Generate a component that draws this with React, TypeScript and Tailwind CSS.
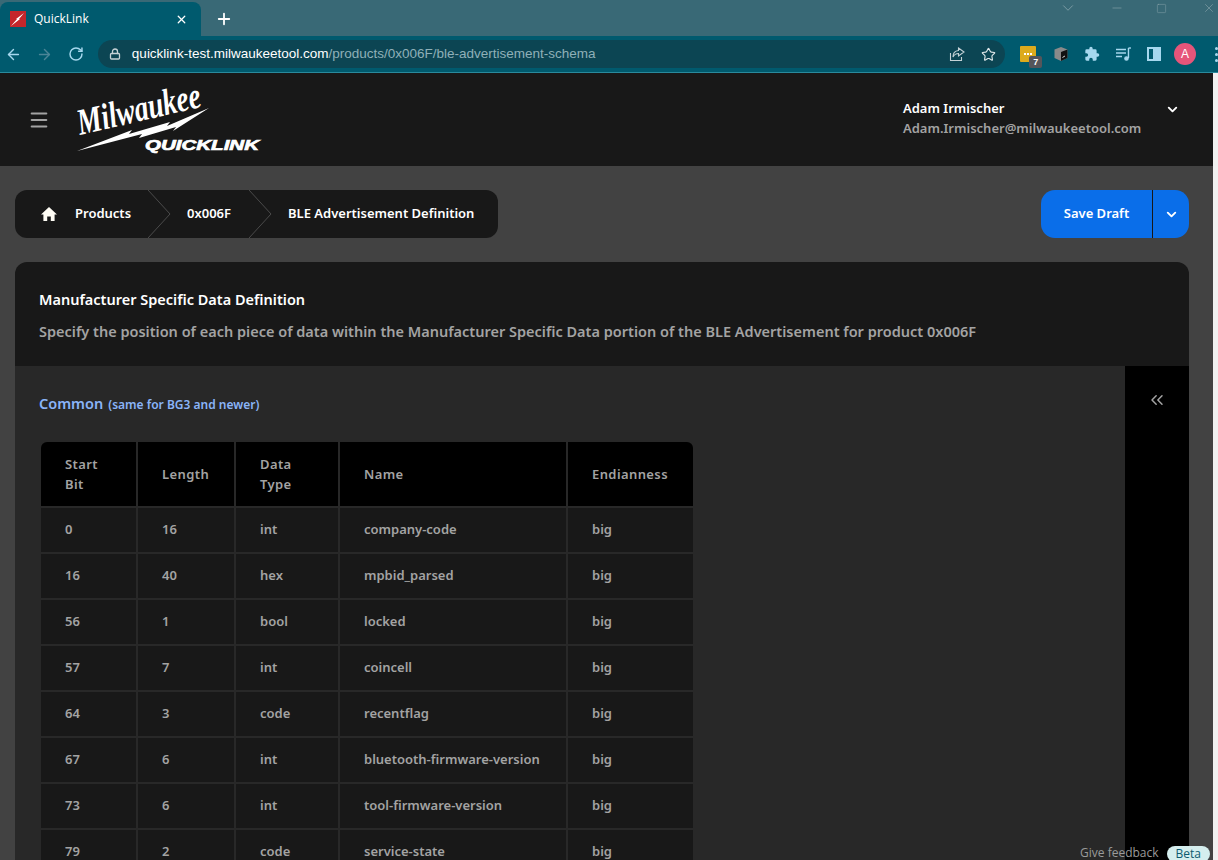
import React from "react";
import { ArrowLeft, ArrowRight, ChevronDown, ChevronsLeft, Lock, Menu, Minus, Plus, RotateCw, Square, Star, X } from "lucide-react";

const columns = [
  { label: ["Start", "Bit"], width: "w-[96px]" },
  { label: ["Length"], width: "w-[98px]" },
  { label: ["Data", "Type"], width: "w-[104px]" },
  { label: ["Name"], width: "w-[228px]" },
  { label: ["Endianness"], width: "w-[126px]" },
];

const rows = [
  ["0", "16", "int", "company-code", "big"],
  ["16", "40", "hex", "mpbid_parsed", "big"],
  ["56", "1", "bool", "locked", "big"],
  ["57", "7", "int", "coincell", "big"],
  ["64", "3", "code", "recentflag", "big"],
  ["67", "6", "int", "bluetooth-firmware-version", "big"],
  ["73", "6", "int", "tool-firmware-version", "big"],
  ["79", "2", "code", "service-state", "big"],
  ["81", "1", "bool", "paired", "big"],
];

const Logo = () => (
  <svg width="190" height="76" viewBox="0 0 190 76" className="shrink-0">
    <text
      x="3"
      y="53"
      transform="rotate(-13 3 53)"
      fill="#fff"
      fontFamily="'Liberation Serif', serif"
      fontStyle="italic"
      fontWeight="700"
      fontSize="37"
      textLength="126"
      lengthAdjust="spacingAndGlyphs"
    >
      Milwaukee
    </text>
    <path d="M0 69 L55 48 L52 52 L93 40 L90 44 L132 26 L96 49 L99 45 L62 56 L65 52 Z" fill="#fff" />
    <text x="68" y="68" fill="#fff" fontFamily="'Liberation Sans', sans-serif" fontStyle="italic" fontWeight="700" fontSize="14.5" textLength="114" lengthAdjust="spacingAndGlyphs" stroke="#fff" strokeWidth="0.7">
      QUICKLINK
    </text>
  </svg>
);

const BrowserChrome = () => (
  <div className="shrink-0">
    <div className="h-[36px] bg-[#396976] flex items-end relative">
      <div className="w-[201px] h-[34px] bg-[#005a6e] rounded-t-lg flex items-center pl-[10px] pr-[13px]">
        <svg width="16" height="16" viewBox="0 0 16 16" className="shrink-0">
          <rect width="16" height="16" fill="#c4262b" />
          <path d="M1 15 L7 8 L6 8 L14 2 L9 8 L10 8 Z" fill="#fff" />
        </svg>
        <span className="ml-[8px] text-[12px] text-white font-['Open_Sans',sans-serif]">QuickLink</span>
        <X size={13} strokeWidth={2.4} className="ml-auto text-white" />
      </div>
      <div className="ml-[14px] mb-[8px] text-white">
        <Plus size={18} strokeWidth={2.4} />
      </div>
      <div className="ml-auto h-[16px] self-start flex items-center text-[#8fa9b0] mt-0">
        <ChevronDown size={18} strokeWidth={1} className="mr-[33px]" />
        <Minus size={14} strokeWidth={1} className="mr-[32px]" />
        <Square size={11} strokeWidth={1} className="mr-[35px]" />
        <X size={14} strokeWidth={1} className="mr-[2px]" />
      </div>
    </div>
    <div className="h-[37px] bg-[#005a6e] border-b border-[#2a8a9c] flex items-center">
      <ArrowLeft size={17} strokeWidth={2} className="ml-[5px] text-[#a6d8ee]" />
      <ArrowRight size={17} strokeWidth={2} className="ml-[14px] text-[#4b8597]" />
      <RotateCw size={16} strokeWidth={2.2} className="ml-[15px] text-[#a6d8ee]" />
      <div className="ml-[14px] w-[910px] h-[28px] rounded-full bg-[#0c4553] flex items-center pl-[11px] pr-[9px]">
        <Lock size={12} strokeWidth={2.6} className="text-[#c5d2d6]" />
        <span className="ml-[11px] text-[13.5px] leading-none text-[#8fb0b8] font-['Liberation_Sans',sans-serif] whitespace-nowrap">
          <span className="text-white">quicklink-test.milwaukeetool.com</span>/products/0x006F/ble-advertisement-schema
        </span>
        <svg width="16" height="16" viewBox="0 0 16 16" className="ml-auto mr-[16px] text-[#c5d2d6]" fill="none" stroke="currentColor" strokeWidth="1.1">
          <path d="M1.5 7 V14.5 H12.5 V11" />
          <path d="M9.5 2 L15 6 L9.5 10 V7.5 C6.5 7.5 5 9 4 11 C4 7.5 6 4.8 9.5 4.5 Z" />
        </svg>
        <Star size={15} strokeWidth={1.8} className="text-[#dfe7e9]" />
      </div>
      <div className="ml-[15px] relative w-[16px] h-[16px] bg-[#dcab1d] rounded-[1px] flex items-center justify-center gap-[1px]">
        <i className="w-[2px] h-[2px] bg-white" />
        <i className="w-[2px] h-[2px] bg-white" />
        <i className="w-[2px] h-[2px] bg-white" />
        <span className="absolute left-[9px] top-[10px] w-[13px] h-[12px] rounded-[2px] bg-[#55555a] text-white text-[9px] font-bold leading-[12px] text-center font-['Liberation_Sans',sans-serif]">7</span>
      </div>
      <svg width="16" height="16" viewBox="0 0 16 16" className="ml-[17px]">
        <path d="M8 1 L14.5 3.5 V12 L8 15 L1.5 12 V3.5 Z" fill="#8a8a8a" />
        <path d="M8 6 L14.5 3.5 V12 L8 15 Z" fill="#111" />
        <path d="M9.5 11.5 L12 10" stroke="#ddd" strokeWidth="1" />
      </svg>
      <svg width="16" height="16" viewBox="0 0 24 24" className="ml-[15px]" fill="#a6d8ee">
        <path d="M20.5 11H19V7a2 2 0 0 0-2-2h-4V3.5a2.5 2.5 0 0 0-5 0V5H4a2 2 0 0 0-2 2v3.8h1.5a2.7 2.7 0 0 1 0 5.4H2V20a2 2 0 0 0 2 2h3.8v-1.5a2.7 2.7 0 0 1 5.4 0V22H17a2 2 0 0 0 2-2v-4h1.5a2.5 2.5 0 0 0 0-5z" />
      </svg>
      <svg width="17" height="16" viewBox="0 0 17 16" className="ml-[15px]" fill="none" stroke="#a6d8ee" strokeWidth="1.4">
        <path d="M1 3.5 H11 M1 7 H11 M1 10.5 H7" />
        <path d="M13.5 2 V12" />
        <path d="M13.5 2 H16" />
        <circle cx="11.5" cy="12.5" r="1.6" fill="#a6d8ee" />
      </svg>
      <div className="ml-[15px] w-[14px] h-[14px] border-2 border-[#a6d8ee] flex justify-end">
        <div className="w-[6px] bg-[#a6d8ee]" />
      </div>
      <div className="ml-[13px] w-[22px] h-[22px] rounded-full bg-[#e6557a] text-white text-[12px] flex items-center justify-center font-['Liberation_Sans',sans-serif]">A</div>
      <div className="ml-[19px] flex flex-col gap-[3px]">
        <i className="w-[3px] h-[3px] rounded-full bg-[#a6d8ee]" />
        <i className="w-[3px] h-[3px] rounded-full bg-[#a6d8ee]" />
        <i className="w-[3px] h-[3px] rounded-full bg-[#a6d8ee]" />
      </div>
    </div>
  </div>
);

const Crumb = ({ children, className }: { children: React.ReactNode; className: string }) => (
  <div className={`h-full flex items-center relative ${className}`}>
    <span className="text-[13px] font-semibold text-white whitespace-nowrap">{children}</span>
  </div>
);

const Chevron = () => (
  <svg width="24" height="48" viewBox="0 0 24 48" fill="none" stroke="#4a4a4a" strokeWidth="1" className="shrink-0">
    <path d="M0 0 L22 24 L0 48" />
  </svg>
);

const Breadcrumbs = () => (
  <div className="h-[48px] w-[483px] rounded-[12px] bg-[#181818] flex items-center">
    <svg width="16" height="16" viewBox="0 0 16 16" fill="#fffdf5" className="ml-[26px] shrink-0">
      <path d="M8 1 L16 8.5 H13.6 V15 H9.8 V10.5 H6.2 V15 H2.4 V8.5 H0 Z" />
    </svg>
    <Crumb className="ml-[18px] w-[73px]">Products</Crumb>
    <Chevron />
    <Crumb className="ml-[15px] w-[62px]">0x006F</Crumb>
    <Chevron />
    <Crumb className="ml-[15px]">BLE Advertisement Definition</Crumb>
  </div>
);

const SaveButton = () => (
  <div className="h-[48px] w-[148px] rounded-[14px] bg-[#0a6ee9] flex items-center text-white overflow-hidden">
    <span className="w-[111px] text-center text-[13px] font-semibold">Save Draft</span>
    <div className="w-px h-full bg-[#181818]" />
    <div className="flex-1 flex justify-center">
      <ChevronDown size={15} strokeWidth={3} />
    </div>
  </div>
);

const SchemaTable = () => (
  <div className="w-[652px] rounded-t-[6px] overflow-hidden">
    <table className="w-[652px] table-fixed border-collapse text-[13px] font-semibold">
      <thead>
        <tr className="h-[65px] bg-black text-[#a3a3a3]">
          {columns.map((col, i) => (
            <th key={i} className={`${col.width} border-r-2 border-b-2 last:border-r-0 border-[#282828] pl-[24px] text-left font-semibold leading-[20px] tracking-[0.4px]`}>
              {col.label.map((part) => (
                <div key={part}>{part}</div>
              ))}
            </th>
          ))}
        </tr>
      </thead>
      <tbody>
        {rows.map((row) => (
          <tr key={row[0]} className="h-[46px] bg-[#181818] text-[#a3a3a3]">
            {row.map((cell, i) => (
              <td key={i} className="border-r-2 border-b-2 last:border-r-0 border-[#282828] pl-[24px]">
                {cell}
              </td>
            ))}
          </tr>
        ))}
      </tbody>
    </table>
  </div>
);

export default function App() {
  return (
    <div className="h-[860px] overflow-hidden flex flex-col bg-[#424242] font-['Noto_Sans',sans-serif] relative">
      <BrowserChrome />
      <div className="flex-1 min-h-0 flex">
        <div className="flex-1 min-w-0 flex flex-col">
          <header className="h-[93px] shrink-0 bg-[#181818] flex items-center">
            <Menu size={22} strokeWidth={2.2} className="ml-[28px] text-[#a3a3a3]" />
            <div className="ml-[27px]">
              <Logo />
            </div>
            <div className="ml-[636px] -mt-[4px]">
              <div className="text-[13px] font-semibold text-white leading-[20px]">Adam Irmischer</div>
              <div className="text-[13px] font-semibold text-[#a3a3a3] leading-[20px]">Adam.Irmischer@milwaukeetool.com</div>
            </div>
            <ChevronDown size={15} strokeWidth={3} className="ml-[24px] -mt-[20px] text-white" />
          </header>
          <div className="flex-1 min-h-0 px-[15px] pr-[24px] pt-[24px]">
            <div className="flex items-center justify-between">
              <Breadcrumbs />
              <SaveButton />
            </div>
            <section className="mt-[24px] rounded-t-[12px] overflow-hidden">
              <div className="h-[104px] bg-[#181818] pl-[24px] pt-[26px]">
                <h1 className="text-[14.5px] leading-[22px] font-semibold text-white">Manufacturer Specific Data Definition</h1>
                <p className="mt-[10px] text-[14.5px] leading-[22px] font-semibold text-[#a3a3a3]">
                  Specify the position of each piece of data within the Manufacturer Specific Data portion of the BLE Advertisement for product 0x006F
                </p>
              </div>
              <div className="flex h-[600px]">
                <div className="flex-1 bg-[#282828] pl-[24px] pt-[25px]">
                  <div className="flex items-baseline text-[#8ab4f8] font-semibold leading-[24px]">
                    <span className="text-[14.5px]">Common</span>
                    <span className="ml-[5px] text-[12px]">(same for BG3 and newer)</span>
                  </div>
                  <div className="mt-[25px] ml-[2px]">
                    <SchemaTable />
                  </div>
                </div>
                <div className="w-[64px] bg-black flex justify-center pt-[24px]">
                  <ChevronsLeft size={20} strokeWidth={1.8} className="text-[#a3a3a3]" />
                </div>
              </div>
            </section>
          </div>
        </div>
        <div className="w-[5px] shrink-0 bg-[#f1f1f1]" />
      </div>
      <div className="absolute right-[8px] bottom-0 h-[14px] flex items-center gap-[8px] font-['Open_Sans',sans-serif]">
        <span className="text-[12px] text-[#9a9a9a]">Give feedback</span>
        <span className="h-[16px] mb-[-2px] px-[9px] rounded-full bg-[#d5eeee] text-[12px] leading-[16px] text-[#0d5a6e]">Beta</span>
      </div>
    </div>
  );
}
